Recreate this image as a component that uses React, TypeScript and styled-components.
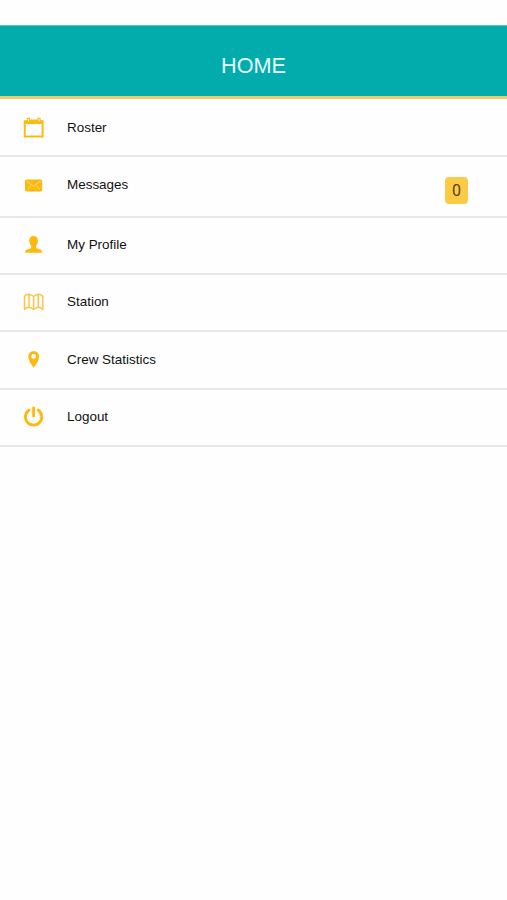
import React from 'react';
import styled, { createGlobalStyle } from 'styled-components';

const GlobalStyle = createGlobalStyle`
  body {
    margin: 0;
    background: #fefefe;
    font-family: "Liberation Sans", Arial, sans-serif;
  }
`;

const Screen = styled.main`
  box-sizing: border-box;
  min-height: 900px;
  padding-top: 25px;
`;

const Header = styled.header`
  box-sizing: border-box;
  display: flex;
  align-items: center;
  justify-content: center;
  height: 74px;
  padding-top: 10px;
  background: #02acac;
  border-top: 1px solid #52c5c4;
  border-bottom: 3px solid #ebcc6c;
`;

const Title = styled.h1`
  margin: 0;
  font-size: 21.7px;
  font-weight: 400;
  line-height: 26px;
  color: #e6fbfa;
`;

const Menu = styled.nav`
  display: flex;
  flex-direction: column;
`;

const MenuRow = styled.a<{ $height: number; $top?: number }>`
  box-sizing: border-box;
  display: flex;
  align-items: flex-start;
  height: ${(p) => p.$height}px;
  padding: ${(p) => p.$top ?? 18}px 39px 0 23px;
  border-bottom: 2px solid #e8e8e8;
  color: #111;
  cursor: pointer;
`;

const Icon = styled.svg`
  display: block;
  flex: none;
  width: 22px;
  height: 20px;
  margin-right: 22px;
  fill: #fcb90f;
`;

const Label = styled.span`
  flex: 1;
  font-size: 13.45px;
  line-height: 20px;
`;

const Badge = styled.span`
  width: 23px;
  height: 27px;
  margin-top: 2px;
  border-radius: 4px;
  background: #fdca46;
  font-family: Roboto, "Liberation Sans", sans-serif;
  font-size: 16px;
  line-height: 27px;
  text-align: center;
  color: #51431a;
`;

const icons = {
  calendar: (
    <path
      fillRule="evenodd"
      d="M.8 2.200h3V-.2h3.200v1.600h7.400V-.2h3.200v2.400h3V19.400H.8ZM2.700 6.100v11.400h16V6.100ZM4.900 1v2.300h1V1Zm10.600 0v2.300h1V1Z"
    />
  ),
  envelope: (
    <>
      <rect x="2" y="4.400" width="17.200" height="12" rx="1.600" />
      <path
        d="m3.600 6.300 7 4.900 7-4.900M4.300 14.300l3.400-3.300m9.200 3.300L13.500 11"
        fill="none"
        stroke="#ffe39a"
        strokeWidth=".9"
      />
    </>
  ),
  user: (
    <path d="M10.600 1c2.800 0 4.300 1.900 4.300 4.700 0 2.200-.7 3.800-1.900 5v1.500c0 .7.400 1 1 1.200l3.500 1.400c1 .4 1.400 1 1.400 1.900v1H2.300v-1c0-.9.400-1.500 1.400-1.900l3.500-1.400c.6-.2 1-.5 1-1.200v-1.500c-1.200-1.200-1.900-2.800-1.900-5 0-2.800 1.500-4.700 4.300-4.700Z" />
  ),
  map: (
    <path
      d="M1.500 4.400Q4 1.900 6 2.300q2.700.6 4.600 2.200 1.900-1.600 4.600-2.200 2.100-.4 4.600 2.100v13q-2.500-2.300-4.600-2.200-2.700.6-4.600 2.200-1.900-1.600-4.600-2.200-2.100-.1-4.500 2.200ZM6 2.300v12.900m4.600-10.700v12.900m4.600-15.100v12.900"
      fill="none"
      stroke="#fbc54a"
      strokeWidth="1.500"
      strokeLinejoin="round"
    />
  ),
  pin: (
    <path
      fillRule="evenodd"
      d="M10.700 1a5.400 5.400 0 0 1 5.400 5.400c0 3.500-2.800 7.800-5.400 11.400-2.600-3.600-5.400-7.900-5.400-11.400A5.400 5.400 0 0 1 10.700 1Zm0 3a2.400 2.400 0 1 0 0 4.800 2.400 2.400 0 0 0 0-4.800Z"
    />
  ),
  power: (
    <path
      d="M6.100 3a8.200 8.200 0 1 0 9 0M10.600.8v8.300"
      fill="none"
      stroke="#fcb90f"
      strokeWidth="2.800"
      strokeLinecap="round"
    />
  ),
};

type Item = {
  label: string;
  icon: keyof typeof icons;
  height: number;
  top?: number;
  badge?: number;
};

const items: Item[] = [
  { label: 'Roster', icon: 'calendar', height: 58, top: 18.5 },
  { label: 'Messages', icon: 'envelope', height: 61, badge: 0 },
  { label: 'My Profile', icon: 'user', height: 57, top: 17 },
  { label: 'Station', icon: 'map', height: 57, top: 17 },
  { label: 'Crew Statistics', icon: 'pin', height: 58 },
  { label: 'Logout', icon: 'power', height: 57, top: 17 },
];

export default function App() {
  return (
    <Screen>
      <GlobalStyle />
      <Header>
        <Title>HOME</Title>
      </Header>
      <Menu>
        {items.map((item) => (
          <MenuRow key={item.label} $height={item.height} $top={item.top}>
            <Icon viewBox="0 0 22 20" overflow="visible" aria-hidden="true">
              {icons[item.icon]}
            </Icon>
            <Label>{item.label}</Label>
            {item.badge !== undefined && <Badge>{item.badge}</Badge>}
          </MenuRow>
        ))}
      </Menu>
    </Screen>
  );
}
